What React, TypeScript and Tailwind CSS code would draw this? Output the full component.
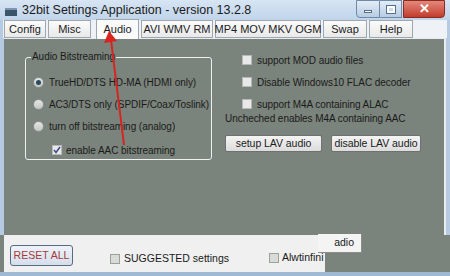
import React from "react";

const Radio = ({ on }: { on?: boolean }) => (
    <span className="w-[11px] h-[11px] rounded-full border border-[#8c918c] bg-gradient-to-b from-[#e4e6e4] to-[#c4c8c4] flex items-center justify-center shrink-0">
        {on && <span className="w-[5px] h-[5px] rounded-full bg-[#2b4a5e]"></span>}
    </span>
);

const Check = ({ on, light }: { on?: boolean; light?: boolean }) => (
    <span
        className={
            "w-[10px] h-[10px] border flex items-center justify-center shrink-0 " +
            (light ? "border-[#b8b8b8] bg-[#e8e8e8]" : "border-[#9aa09a] bg-[#d8dcd8]")
        }
    >
        {on && (
            <svg width="8" height="8" viewBox="0 0 8 8">
                <path d="M1 4 L3 6.5 L7 1" stroke="#3a4a8a" strokeWidth="1.5" fill="none" />
            </svg>
        )}
    </span>
);

const Tab = ({ label, w, active }: { label: string; w: string; active?: boolean }) => (
    <div
        className={
            "shrink-0 flex items-center justify-center border border-[#9ea6ae] text-[11px] text-[#1c1c1c] whitespace-nowrap " +
            w +
            (active
                ? " h-[20px] -mb-px border-b-0 bg-[#fafafa] relative"
                : " h-[18px] bg-gradient-to-b from-[#fbfbfb] to-[#e9e9e9]")
        }
    >
        {label}
    </div>
);

const Btn = ({ label, w }: { label: string; w: string }) => (
    <button
        className={
            "h-[17px] rounded-[2px] border border-[#707070] bg-gradient-to-b from-[#f4f4f4] to-[#dcdcdc] text-[10.5px] text-[#1a1a1a] whitespace-nowrap flex items-center justify-center " +
            w
        }
    >
        {label}
    </button>
);

const Row = ({ children, cls = "" }: { children: React.ReactNode; cls?: string }) => (
    <div className={"flex items-center h-[14px] whitespace-nowrap " + cls}>{children}</div>
);

export default function App() {
    return (
        <div className="relative w-[450px] h-[276px] overflow-hidden bg-[#b6cbe2] flex flex-col font-['Liberation_Sans',sans-serif]">
            {/* title bar */}
            <div className="h-[20px] flex items-center bg-gradient-to-b from-[#d7e5f4] to-[#c0d4ea]">
                <span className="ml-[5px] w-[12px] h-[8px] mt-[3px] bg-[#3c5468] border-t-2 border-[#7d97b0]"></span>
                <span className="ml-[5px] text-[12.5px] text-[#1a1a1a] whitespace-nowrap">
                    32bit Settings Application - version 13.2.8
                </span>
                <div className="ml-auto self-start flex h-[18px] mr-[5px]">
                    <div className="w-[24px] border border-[#6f8aa8] rounded-bl-[4px] bg-gradient-to-b from-[#e3edf7] to-[#b7cce3] flex items-center justify-center">
                        <span className="w-[8px] h-[3px] bg-white border border-[#56708c] mt-[4px]"></span>
                    </div>
                    <div className="w-[22px] border-y border-r border-[#6f8aa8] bg-gradient-to-b from-[#e3edf7] to-[#b7cce3] flex items-center justify-center">
                        <span className="w-[8px] h-[7px] border-2 border-white outline outline-1 outline-[#56708c]"></span>
                    </div>
                    <div className="w-[42px] ml-[1px] border border-[#8a2a22] rounded-br-[4px] bg-gradient-to-b from-[#e3887c] to-[#c2392c] flex items-center justify-center text-white text-[13px] font-bold">
                        ✕
                    </div>
                </div>
            </div>

            {/* tab strip */}
            <div className="h-[18px] mx-[3px] bg-[#eef1f5] flex items-end gap-[2px] pl-px">
                <Tab label="Config" w="w-[42px]" />
                <Tab label="Misc" w="w-[43px]" />
                <Tab label="Audio" w="w-[43px] ml-[3px]" active />
                <Tab label="AVI WMV RM" w="w-[72px]" />
                <Tab label="MP4 MOV MKV OGM" w="w-[106px]" />
                <Tab label="Swap" w="w-[44px]" />
                <Tab label="Help" w="w-[44px]" />
            </div>

            {/* panel */}
            <div className="h-[197px] mx-[4px] flex bg-[#7b847c] border-t border-r-2 border-[#e9ecef] text-[10px] tracking-[-0.05px] text-[#1a1a1a]">
                <div className="w-[214px] shrink-0 pl-[21px] pt-[18px]">
                    <div className="relative w-[187px] h-[103px] border border-[#eef0ee] rounded-[3px]">
                        <span className="absolute -top-[8px] left-[5px] px-[1px] bg-[#7b847c] leading-[14px] whitespace-nowrap">
                            Audio Bitstreaming
                        </span>
                        <div className="flex flex-col pl-[7px] pt-[17px] gap-[8px]">
                            <Row cls="gap-[5px]">
                                <Radio on />
                                <span>TrueHD/DTS HD-MA (HDMI only)</span>
                            </Row>
                            <Row cls="gap-[5px]">
                                <Radio />
                                <span>AC3/DTS only (SPDIF/Coax/Toslink)</span>
                            </Row>
                            <Row cls="gap-[5px]">
                                <Radio />
                                <span>turn off bitstreaming (analog)</span>
                            </Row>
                            <Row cls="gap-[4px] pl-[19px] mt-[2px]">
                                <Check on light />
                                <span>enable AAC bitstreaming</span>
                            </Row>
                        </div>
                    </div>
                </div>
                <div className="flex flex-col pl-[7px] pt-[14px]">
                    <div className="flex flex-col gap-[8px] pl-[17px]">
                        <Row cls="gap-[5px]">
                            <Check light />
                            <span>support MOD audio files</span>
                        </Row>
                        <Row cls="gap-[5px]">
                            <Check light />
                            <span>Disable Windows10 FLAC decoder</span>
                        </Row>
                        <Row cls="gap-[5px]">
                            <Check light />
                            <span>support M4A containing ALAC</span>
                        </Row>
                    </div>
                    <span className="h-[14px] leading-[14px] mt-[1px] whitespace-nowrap">Uncheched enables M4A containing AAC</span>
                    <div className="flex gap-[9px] mt-[9px]">
                        <Btn label="setup LAV audio" w="w-[97px]" />
                        <Btn label="disable LAV audio" w="w-[90px]" />
                    </div>
                </div>
            </div>

            {/* bottom strip */}
            <div className="flex-1 flex bg-[#7b847c]">
                <div className="w-[321px] h-[37px] ml-[4px] bg-[#f0f0f0] flex items-center text-[10.5px] text-[#1a1a1a] whitespace-nowrap overflow-hidden">
                    <button className="ml-[6px] mt-[4px] w-[63px] h-[21px] shrink-0 rounded-[3px] border border-[#5a6a80] bg-gradient-to-b from-[#eef3f9] to-[#d4dfec] text-[#a8383a] text-[10.5px]">
                        RESET ALL
                    </button>
                    <div className="ml-[37px] mt-[10px] flex items-center gap-[4px] shrink-0">
                        <Check />
                        <span>SUGGESTED settings</span>
                    </div>
                    <div className="ml-[40px] mt-[8px] flex items-center gap-[3px] shrink-0">
                        <Check />
                        <span>Alwtinfini</span>
                    </div>
                </div>
            </div>
            <div className="h-[4px] bg-[#9fb8d3]"></div>

            {/* overlapping button fragment */}
            <div className="absolute left-[318px] top-[234px] w-[44px] h-[19px] bg-[#f4f4f4] border-r border-b border-[#8c8c8c] flex items-center justify-end pr-[7px] text-[10.5px] text-[#1a1a1a]">
                adio
            </div>

            {/* red arrow */}
            <svg className="absolute left-0 top-0 pointer-events-none" width="450" height="276">
                <line x1="111" y1="40" x2="124" y2="145" stroke="#d8231f" strokeWidth="2" />
                <polygon points="109,31 104,43 117,41" fill="#d8231f" />
            </svg>
        </div>
    );
}
